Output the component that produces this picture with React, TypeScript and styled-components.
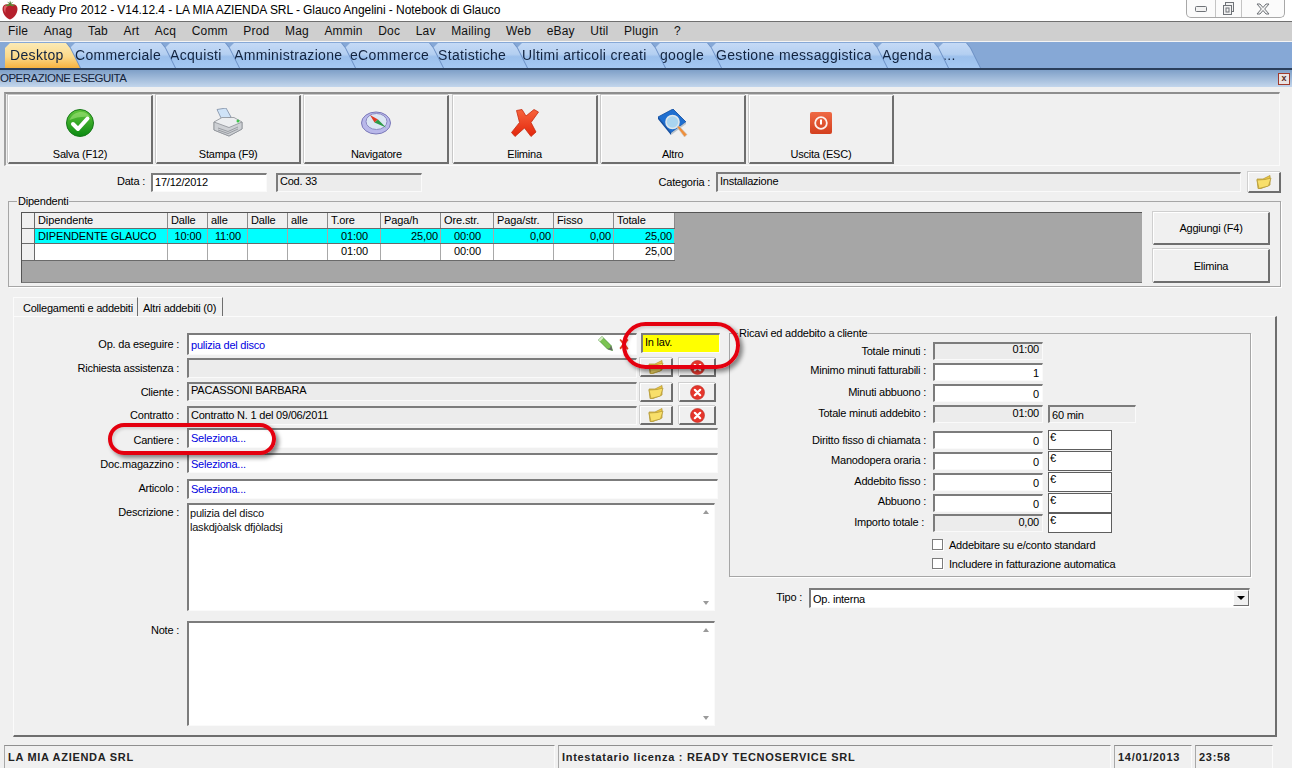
import styled, { createGlobalStyle } from "styled-components";

const GlobalStyle = createGlobalStyle`
	html, body {
		margin: 0;
		padding: 0;
		background: #f0f0f0;
	}
	* {
		box-sizing: border-box;
	}
`;

const Page = styled.div`
	position: relative;
	width: 1292px;
	height: 768px;
	overflow: hidden;
	background: #f0f0f0;
	color: #000;
	font-family: "Liberation Sans", Arial, sans-serif;
	font-size: 11px;
	letter-spacing: -0.22px;
`;

const TitleBar = styled.div`
	height: 22px;
	display: flex;
	align-items: flex-start;
	background: #fff;
	border-bottom: 1px solid #707070;
	padding-left: 2px;
`;
const TitleText = styled.span`
	margin: 3px 0 0 3px;
	font-size: 12px;
	line-height: 15px;
	letter-spacing: -0.06px;
	white-space: nowrap;
`;
const WindowButtons = styled.div`
	margin-left: auto;
	margin-right: 7px;
	width: 99px;
	height: 18px;
	display: grid;
	grid-template-columns: 28px 26px 1fr;
	border: 1px solid #a8a8a8;
	border-top: 0;
	border-radius: 0 0 5px 5px;
	background: #fbfbfb;
	svg {
		margin: 0 auto;
	}
`;
const WindowButton = styled.div`
	display: flex;
	align-items: center;
	& + & {
		border-left: 1px solid #c4c4c4;
	}
`;

const MenuBar = styled.div`
	height: 20px;
	display: flex;
	align-items: center;
	gap: 15.5px;
	padding: 0 0 1px 8px;
	background: #cfcfcf;
	border-bottom: 1px solid #f4f4f4;
	font-size: 12px;
	letter-spacing: 0.2px;
	color: #111;
`;
const MenuItem = styled.span`
	white-space: nowrap;
`;

const TabBar = styled.div`
	height: 28px;
	display: flex;
	align-items: flex-end;
	padding-left: 5px;
	background: #86a8d6;
	border-bottom: 2px solid #2b3f5c;
`;
const TabEdge = styled.div<{ $w: number; $z: number }>`
	position: relative;
	z-index: ${(props) => props.$z};
	width: ${(props) => props.$w}px;
	margin-right: -10px;
	filter: drop-shadow(1px 0 0 #6b8fc4);
`;
const TabFace = styled.div<{ $active?: boolean }>`
	height: 25px;
	padding: 3px 0 0 5px;
	clip-path: polygon(0 100%, 0 5px, 5px 0, calc(100% - 14px) 0, calc(100% - 10px) 5px, 100% 100%);
	background: ${(props) =>
		props.$active
			? "linear-gradient(#fbeab6 0%, #fbd98a 55%, #f7b23f 100%)"
			: "linear-gradient(#c5daf6 0%, #b4cff1 45%, #9cc0ec 55%, #a5c8f2 100%)"};
	font-size: 14px;
	line-height: 19px;
	letter-spacing: 0.33px;
	white-space: nowrap;
	color: #12233f;
`;

const CaptionBar = styled.div`
	height: 17px;
	display: flex;
	align-items: center;
	justify-content: space-between;
	padding: 0 2px 2px 0;
	background: linear-gradient(#7fa0c8, #c3d6ec);
	font-size: 11.5px;
	letter-spacing: -0.5px;
	color: #14233a;
`;
const CaptionClose = styled.span`
	width: 12px;
	height: 12px;
	margin-top: 2px;
	display: flex;
	align-items: center;
	justify-content: center;
	background: #e9e3e3;
	border: 1px solid #a03a2c;
	font-size: 9px;
	font-weight: bold;
	line-height: 9px;
	letter-spacing: 0;
	color: #5b2a22;
`;

const ToolbarPanel = styled.div`
	height: 74px;
	margin: 5px 12px 0 4px;
	padding: 1px 0 0 2px;
	display: flex;
	gap: 3.2px;
	border: 1px solid #fafafa;
	border-top: 2px solid #8e8e8e;
	border-left: 2px solid #a0a0a0;
`;
const ToolButton = styled.div`
	width: 145px;
	height: 69px;
	display: flex;
	flex-direction: column;
	align-items: center;
	padding-top: 12px;
	background: #f0f0f0;
	border: 2px solid #6e6e6e;
	border-top: 1px solid #fff;
	border-left: 1px solid #fff;
	box-shadow: -1px -1px 0 #c8c8c8;
`;
const ToolIcon = styled.div`
	width: 32px;
	height: 30px;
	display: flex;
	align-items: center;
	justify-content: center;
`;
const ToolLabel = styled.span`
	margin-top: 9px;
	line-height: 14px;
`;

const DataRow = styled.div`
	height: 21px;
	margin-top: 6px;
	display: flex;
	align-items: flex-start;
`;
const Caption = styled.span<{ $w?: number; $mt?: number }>`
	width: ${(props) => (props.$w ? props.$w + "px" : "auto")};
	margin-top: ${(props) => props.$mt || 0}px;
	flex: none;
	text-align: right;
	line-height: 14px;
	white-space: nowrap;
`;

const Sunken = styled.div<{
	$w?: number;
	$h?: number;
	$ml?: number;
	$mt?: number;
	$pt?: number;
	$lh?: number;
	$fill?: string;
	$blue?: boolean;
	$right?: boolean;
}>`
	width: ${(props) => (props.$w ? props.$w + "px" : "100%")};
	height: ${(props) => (props.$h ? props.$h + "px" : "100%")};
	margin-left: ${(props) => props.$ml || 0}px;
	margin-top: ${(props) => props.$mt || 0}px;
	flex: none;
	padding: ${(props) => props.$pt ?? 1}px 3px 0 2px;
	background: ${(props) => props.$fill || "#fff"};
	border-style: solid;
	border-width: 2px 1px 1px 2px;
	border-color: #7c7c7c #fafafa #fafafa #7c7c7c;
	color: ${(props) => (props.$blue ? "#0000e0" : "#000")};
	text-align: ${(props) => (props.$right ? "right" : "left")};
	line-height: ${(props) => props.$lh || 14}px;
	white-space: nowrap;
`;

const GroupBox = styled.div<{ $h: number }>`
	position: relative;
	height: ${(props) => props.$h}px;
	border: 1px solid #a6a6a6;
	box-shadow: 1px 1px 0 #fff;
`;
const GroupTitle = styled.span`
	position: absolute;
	top: -7px;
	left: 8px;
	padding: 0 1px;
	background: #f0f0f0;
	line-height: 13px;
`;

const StaffBox = styled(GroupBox)`
	margin: 8px 11px 0 8px;
	padding: 10px 10px 0 12px;
	display: flex;
`;
const GridArea = styled.div`
	width: 1121px;
	height: 71px;
	background: #a6a6a6;
	border-top: 1px solid #555;
	border-left: 1px solid #555;
	border-bottom: 1px solid #777;
	letter-spacing: -0.12px;
`;
const GridRow = styled.div<{ $fill: string; $h: number }>`
	width: 653px;
	height: ${(props) => props.$h}px;
	display: grid;
	grid-template-columns: 13px 133px 40px 40px 40px 40px 53px 60px 53px 60px 60px 61px;
	background: ${(props) => props.$fill};
	border-bottom: 1px solid #6a6a6a;
`;
const GridCell = styled.div<{ $align?: string; $head?: boolean }>`
	padding: 0 2px 0 3px;
	border-right: 1px solid ${(props) => (props.$head ? "#8a8a8a" : "#a8a8a8")};
	text-align: ${(props) => props.$align || "left"};
	line-height: 14px;
	white-space: nowrap;
	overflow: hidden;
`;
const RowMark = styled(GridCell)`
	background: #f0f0f0;
	border-right: 1px solid #6a6a6a;
`;
const SideButtons = styled.div`
	margin-left: 11px;
	display: flex;
	flex-direction: column;
	gap: 4px;
`;

const RaisedButton = styled.div<{ $w: number; $h: number; $ml?: number; $mt?: number }>`
	width: ${(props) => props.$w}px;
	height: ${(props) => props.$h}px;
	margin-left: ${(props) => props.$ml || 0}px;
	margin-top: ${(props) => props.$mt || 0}px;
	flex: none;
	display: flex;
	align-items: center;
	justify-content: center;
	background: #f0f0f0;
	border: 2px solid #6e6e6e;
	border-top: 1px solid #fff;
	border-left: 1px solid #fff;
	box-shadow: -1px -1px 0 #cfcfcf;
`;

const PageTabs = styled.div`
	height: 19px;
	margin: 10px 0 0 13px;
	display: flex;
`;
const PageTab = styled.div<{ $w: number; $active?: boolean }>`
	width: ${(props) => props.$w}px;
	padding: ${(props) => (props.$active ? "3px 0 0 9px" : "3px 0 0 5px")};
	border-right: 1px solid #6e6e6e;
	border-left: ${(props) => (props.$active ? "1px solid #fbfbfb" : "0")};
	border-top: 1px solid #fbfbfb;
	line-height: 14px;
	white-space: nowrap;
`;
const PagePanel = styled.div`
	height: 421px;
	margin: 0 15px 0 13px;
	padding-top: 16px;
	display: flex;
	border-top: 1px solid #fbfbfb;
	border-left: 1px solid #fbfbfb;
	border-right: 2px solid #6e6e6e;
	border-bottom: 2px solid #6e6e6e;
`;
const LeftColumn = styled.div`
	width: 705px;
	flex: none;
`;
const FormRow = styled.div<{ $h: number; $gap?: number }>`
	height: ${(props) => props.$h}px;
	margin-top: ${(props) => props.$gap || 0}px;
	display: flex;
	align-items: flex-start;
`;
const MemoBox = styled.div`
	position: relative;
	width: 528px;
	height: 100%;
	margin-left: 8px;
	padding: 1px 20px 0 1px;
	background: #fff;
	border-style: solid;
	border-width: 2px 1px 1px 2px;
	border-color: #7c7c7c #fafafa #fafafa #7c7c7c;
	line-height: 14px;
	color: #111;
`;
const ArrowUp = styled.i`
	position: absolute;
	top: 5px;
	right: 5px;
	border: 3px solid transparent;
	border-top: 0;
	border-bottom: 4px solid #9a9a9a;
`;
const ArrowDown = styled(ArrowUp)`
	top: auto;
	bottom: 5px;
	border-bottom: 0;
	border-top: 4px solid #9a9a9a;
`;
const InlineIcons = styled.div`
	position: absolute;
	top: 1px;
	right: 7px;
	display: flex;
	align-items: center;
	gap: 6px;
`;
const OpInput = styled(Sunken)`
	position: relative;
`;

const RightColumn = styled.div`
	width: 522px;
	margin-left: 10px;
	flex: none;
`;
const RevenueBox = styled(GroupBox)`
	padding-top: 8px;
`;
const RevenueRow = styled.div<{ $gap?: number }>`
	height: 18px;
	margin-top: ${(props) => props.$gap || 0}px;
	display: flex;
	align-items: flex-start;
`;
const Currency = styled.div`
	width: 64px;
	height: 20px;
	margin: -1px 0 0 5px;
	flex: none;
	padding-left: 1px;
	background: #fff;
	border: 1px solid #5e5e5e;
	line-height: 13px;
`;
const CheckRow = styled.div<{ $gap?: number }>`
	height: 11px;
	margin: ${(props) => props.$gap || 0}px 0 0 202px;
	display: flex;
	align-items: center;
	gap: 6px;
	white-space: nowrap;
`;
const CheckBox = styled.span`
	width: 11px;
	height: 11px;
	flex: none;
	background: #fff;
	border: 1px solid #7c7c7c;
	box-shadow: 1px 1px 0 #fff;
`;
const TypeRow = styled.div`
	height: 20px;
	margin-top: 11px;
	display: flex;
	align-items: flex-start;
`;
const SelectBox = styled(Sunken)`
	position: relative;
	padding-top: 2px;
`;
const SelectArrow = styled.span`
	position: absolute;
	top: 0;
	right: 0;
	width: 16px;
	height: 16px;
	display: flex;
	align-items: center;
	justify-content: center;
	background: #f0f0f0;
	border: 1px solid #6e6e6e;
	border-top-color: #fff;
	border-left-color: #fff;
	&::after {
		content: "";
		border: 4px solid transparent;
		border-bottom: 0;
		border-top: 4px solid #000;
	}
`;

const StatusBar = styled.div`
	height: 23px;
	margin-top: 8px;
	padding-left: 4px;
	display: flex;
	gap: 3px;
`;
const StatusCell = styled.div<{ $w: number }>`
	width: ${(props) => props.$w}px;
	padding: 4px 0 0 3px;
	border-top: 1px solid #8f8f8f;
	border-left: 1px solid #a8a8a8;
	border-right: 1px solid #fbfbfb;
	font-weight: bold;
	letter-spacing: 0.7px;
	line-height: 14px;
	white-space: nowrap;
	color: #222;
`;

const RedRing = styled.div<{ $x: number; $y: number; $w: number; $h: number }>`
	position: absolute;
	left: ${(props) => props.$x}px;
	top: ${(props) => props.$y}px;
	width: ${(props) => props.$w}px;
	height: ${(props) => props.$h}px;
	border: 4px solid #e4000f;
	border-radius: ${(props) => props.$h / 2}px;
	box-shadow: 3px 3px 4px rgba(0, 0, 0, 0.45), inset 2px 2px 3px rgba(0, 0, 0, 0.12);
`;

function Strawberry() {
	return (
		<svg width="16" height="20" viewBox="0 0 16 20">
			<path d="M8 5C12 3 15.500 5 15.500 9C15.500 14 11 19 8 19.500C5 19 .5 14 .5 9C.5 5 4 3 8 5Z" fill="#b5202c" />
			<path d="M2 7C2.500 5 5 5 6 6C4 7 3 10 3.500 13C2 11 1.500 9 2 7Z" fill="#e0616a" />
			<path d="M8 5L5 1.500L7.500 3L8 .5L9 3L11.500 1.500Z" fill="#4d7a2c" />
			<path d="M3 5.500L8 3.500L13 5.500L10 6.200L8 5.200L6 6.200Z" fill="#5b8a34" />
		</svg>
	);
}

function CheckIcon() {
	return (
		<svg width="28" height="28" viewBox="0 0 28 28">
			<defs>
				<linearGradient id="greenDisc" x1="0" y1="0" x2="0" y2="1">
					<stop offset="0" stopColor="#62c63c" />
					<stop offset="1" stopColor="#0b8a12" />
				</linearGradient>
			</defs>
			<ellipse cx="14" cy="14" rx="13.500" ry="13.500" fill="url(#greenDisc)" stroke="#17791a" />
			<path d="M3.500 11C6 5 11 3 15 3C19 3 22 4.500 24 8C18 7 10 8 3.500 11Z" fill="#a5e57f" opacity=".55" />
			<path d="M7 15L12 20L21.500 9.500" fill="none" stroke="#fff" strokeWidth="4" strokeLinecap="round" strokeLinejoin="round" />
		</svg>
	);
}

function PrinterIcon() {
	return (
		<svg width="30" height="30" viewBox="0 0 30 30">
			<path d="M4 1.500L13 0L18 9L9 12Z" fill="#cfe3f7" stroke="#7d8da3" strokeWidth=".8" />
			<path d="M1 14L9 9.500H21L29 14V21L16 28L1 22Z" fill="#eceef0" stroke="#8b8f95" strokeWidth=".8" />
			<path d="M1 14L16 19.500L29 14V21L16 28L1 22Z" fill="#cdd0d4" stroke="#8b8f95" strokeWidth=".8" />
			<path d="M5 20L15 23.500L25 19M5 22L15 25.500L25 21" fill="none" stroke="#8b8f95" strokeWidth=".8" />
			<circle cx="25" cy="13" r="1.500" fill="#3dc44a" />
		</svg>
	);
}

function CompassIcon() {
	return (
		<svg width="30" height="24" viewBox="0 0 30 24">
			<ellipse cx="15" cy="12" rx="14.500" ry="11" fill="#b9b8ea" stroke="#7a78b8" />
			<ellipse cx="15.500" cy="10.500" rx="10.500" ry="8" fill="#dce6f4" stroke="#8c8ac2" />
			<path d="M9 4L17 8.500L13.500 11.500Z" fill="#e03b24" />
			<path d="M13.500 11.500L17 8.500L25 16.500Z" fill="#2e9a48" />
		</svg>
	);
}

function CrossIcon() {
	return (
		<svg width="28" height="28" viewBox="0 0 28 28">
			<defs>
				<linearGradient id="redCross" x1="0" y1="0" x2="0" y2="1">
					<stop offset="0" stopColor="#f8643c" />
					<stop offset="1" stopColor="#e2260c" />
				</linearGradient>
			</defs>
			<path
				d="M5.500 1.500L11 .5L15 7L23 .5L27.500 3L20 13.500L25 23L20 27.500L13.500 19L4 27.500L.5 23.500L8.500 13.500Z"
				fill="url(#redCross)"
				stroke="#c62b10"
				strokeWidth=".8"
				strokeLinejoin="round"
			/>
		</svg>
	);
}

function BookIcon() {
	return (
		<svg width="30" height="29" viewBox="0 0 30 29">
			<path d="M0 8L15 0L28 13L13 24Z" fill="#1f6fd0" stroke="#0d4a9e" strokeWidth=".8" />
			<path d="M0 8L13 24V26L0 10Z" fill="#0d4a9e" />
			<path d="M13 24L28 13V15L13 26Z" fill="#b9c3cc" />
			<circle cx="14.500" cy="13" r="6.500" fill="#a9d4f0" stroke="#dfe6ea" strokeWidth="1.600" />
			<path d="M19 18L21 17L29 25.500L26.500 28Z" fill="#ef8f3a" stroke="#c8c8c8" strokeWidth=".6" />
		</svg>
	);
}

function PowerIcon() {
	return (
		<svg width="22" height="22" viewBox="0 0 22 22">
			<defs>
				<linearGradient id="powerTile" x1="0" y1="0" x2="0" y2="1">
					<stop offset="0" stopColor="#ef6a45" />
					<stop offset="1" stopColor="#d33f1e" />
				</linearGradient>
			</defs>
			<rect width="22" height="22" rx="2" fill="url(#powerTile)" />
			<circle cx="11" cy="11" r="5.800" fill="none" stroke="#fff" strokeWidth="1.800" opacity=".92" />
			<rect x="10" y="7.500" width="2" height="5" fill="#fff" />
		</svg>
	);
}

function FolderIcon() {
	return (
		<svg width="16" height="14" viewBox="0 0 16 14">
			<path d="M1 4H7L14 .5V10L5 13.500H2Z" fill="#f0c93f" stroke="#b59a3b" strokeWidth=".8" strokeLinejoin="round" />
			<path d="M1 5L9 4.500L15 3L12.500 11L3 13.500Z" fill="#f8df6a" stroke="#b59a3b" strokeWidth=".8" strokeLinejoin="round" />
		</svg>
	);
}

function ClearIcon() {
	return (
		<svg width="15" height="15" viewBox="0 0 15 15">
			<circle cx="7.500" cy="7.500" r="7" fill="#e5352b" stroke="#b92a22" strokeWidth=".6" />
			<path d="M4.800 4.800L10.200 10.200M10.200 4.800L4.800 10.200" stroke="#fff" strokeWidth="2.200" strokeLinecap="round" />
		</svg>
	);
}

function PencilIcon() {
	return (
		<svg width="15" height="15" viewBox="0 0 15 15">
			<path d="M.5 4L4 .5L13 9.500L14.500 14.500L9.500 13Z" fill="#7cc452" stroke="#3f8a2e" strokeWidth=".7" />
			<path d="M.5 4L4 .5L5.500 2L2 5.500Z" fill="#d9efc8" />
			<path d="M12 12L13 9.500L14.500 14.500L9.500 13Z" fill="#666" />
		</svg>
	);
}

function SmallCross() {
	return (
		<svg width="10" height="14" viewBox="0 0 10 14">
			<path d="M1.500 2L5 5L8 1.500L9.500 3L6.500 7L9.500 11.500L8 13L5 9L1.500 12.500L.5 11L3.500 7L.5 3Z" fill="#e2401e" />
		</svg>
	);
}

const menuItems = ["File", "Anag", "Tab", "Art", "Acq", "Comm", "Prod", "Mag", "Ammin", "Doc", "Lav", "Mailing", "Web", "eBay", "Util", "Plugin", "?"];

const tabs = [
	{ label: "Desktop", width: 75, active: true },
	{ label: "Commerciale", width: 105 },
	{ label: "Acquisti", width: 74 },
	{ label: "Amministrazione", width: 126 },
	{ label: "eCommerce", width: 98 },
	{ label: "Statistiche", width: 94 },
	{ label: "Ultimi articoli creati", width: 148 },
	{ label: "google", width: 66 },
	{ label: "Gestione messaggistica", width: 176 },
	{ label: "Agenda", width: 71 },
	{ label: "...", width: 42 },
];

const tools = [
	{ label: "Salva (F12)", icon: <CheckIcon /> },
	{ label: "Stampa (F9)", icon: <PrinterIcon /> },
	{ label: "Navigatore", icon: <CompassIcon /> },
	{ label: "Elimina", icon: <CrossIcon /> },
	{ label: "Altro", icon: <BookIcon /> },
	{ label: "Uscita (ESC)", icon: <PowerIcon /> },
];

const columns = ["Dipendente", "Dalle", "alle", "Dalle", "alle", "T.ore", "Paga/h", "Ore.str.", "Paga/str.", "Fisso", "Totale"];
const columnAlign = ["left", "center", "center", "center", "center", "center", "right", "center", "right", "right", "right"];
const staffRows = [
	{ fill: "#00ffff", h: 15, cells: ["DIPENDENTE GLAUCO", "10:00", "11:00", "", "", "01:00", "25,00", "00:00", "0,00", "0,00", "25,00"] },
	{ fill: "#ffffff", h: 17, cells: ["", "", "", "", "", "01:00", "", "00:00", "", "", "25,00"] },
];

function FileButtons({ top = 0 }: { top?: number }) {
	return (
		<>
			<RaisedButton $w={33} $h={19} $ml={3} $mt={top}>
				<FolderIcon />
			</RaisedButton>
			<RaisedButton $w={37} $h={19} $ml={6} $mt={top}>
				<ClearIcon />
			</RaisedButton>
		</>
	);
}

function App() {
	return (
		<Page>
			<GlobalStyle />
			<TitleBar>
				<Strawberry />
				<TitleText>Ready Pro 2012 - V14.12.4 - LA MIA AZIENDA SRL - Glauco Angelini - Notebook di Glauco</TitleText>
				<WindowButtons>
					<WindowButton>
						<svg width="12" height="6" viewBox="0 0 12 6">
							<rect x=".5" y=".5" width="11" height="5" rx="1" fill="#f2f2f2" stroke="#6f7378" />
						</svg>
					</WindowButton>
					<WindowButton>
						<svg width="11" height="13" viewBox="0 0 11 13">
							<rect x="2.500" y=".5" width="8" height="9" fill="#f2f2f2" stroke="#6f7378" />
							<rect x=".5" y="3.500" width="8" height="9" fill="#f2f2f2" stroke="#6f7378" />
							<rect x="3" y="6" width="3" height="4" fill="none" stroke="#6f7378" />
						</svg>
					</WindowButton>
					<WindowButton>
						<svg width="14" height="12" viewBox="0 0 14 12">
							<path d="M1 1H4L7 4.500L10 1H13L8.700 6L13 11H10L7 7.500L4 11H1L5.300 6Z" fill="#f4f4f4" stroke="#6f7378" />
						</svg>
					</WindowButton>
				</WindowButtons>
			</TitleBar>

			<MenuBar>
				{menuItems.map((item) => (
					<MenuItem key={item}>{item}</MenuItem>
				))}
			</MenuBar>

			<TabBar>
				{tabs.map((tab, i) => (
					<TabEdge key={tab.label} $w={tab.width} $z={tabs.length - i}>
						<TabFace $active={tab.active}>{tab.label}</TabFace>
					</TabEdge>
				))}
			</TabBar>

			<CaptionBar>
				OPERAZIONE ESEGUITA
				<CaptionClose>x</CaptionClose>
			</CaptionBar>

			<ToolbarPanel>
				{tools.map((tool) => (
					<ToolButton key={tool.label}>
						<ToolIcon>{tool.icon}</ToolIcon>
						<ToolLabel>{tool.label}</ToolLabel>
					</ToolButton>
				))}
			</ToolbarPanel>

			<DataRow>
				<Caption $w={145} $mt={2}>Data :</Caption>
				<Sunken $w={116} $h={19} $ml={6} $mt={1} $lh={12}>17/12/2012</Sunken>
				<Sunken $w={146} $h={19} $ml={9} $mt={1} $lh={10} $fill="#ececec">Cod. 33</Sunken>
				<Caption $w={288} $mt={3}>Categoria :</Caption>
				<Sunken $w={525} $h={20} $ml={6} $lh={12} $fill="#ececec">Installazione</Sunken>
				<RaisedButton $w={33} $h={21} $ml={7}>
					<FolderIcon />
				</RaisedButton>
			</DataRow>

			<StaffBox $h={86}>
				<GroupTitle>Dipendenti</GroupTitle>
				<GridArea>
					<GridRow $fill="#f0f0f0" $h={16}>
						<RowMark $head />
						{columns.map((col, i) => (
							<GridCell key={i} $head>{col}</GridCell>
						))}
					</GridRow>
					{staffRows.map((row, r) => (
						<GridRow key={r} $fill={row.fill} $h={row.h}>
							<RowMark />
							{row.cells.map((cell, i) => (
								<GridCell key={i} $align={columnAlign[i]}>{cell}</GridCell>
							))}
						</GridRow>
					))}
				</GridArea>
				<SideButtons>
					<RaisedButton $w={117} $h={33}>Aggiungi (F4)</RaisedButton>
					<RaisedButton $w={117} $h={34}>Elimina</RaisedButton>
				</SideButtons>
			</StaffBox>

			<PageTabs>
				<PageTab $w={125} $active>Collegamenti e addebiti</PageTab>
				<PageTab $w={85}>Altri addebiti (0)</PageTab>
			</PageTabs>
			<PagePanel>
				<LeftColumn>
					<FormRow $h={22}>
						<Caption $w={165} $mt={4}>Op. da eseguire :</Caption>
						<OpInput $w={450} $ml={8} $pt={3} $blue>
							pulizia del disco
							<InlineIcons>
								<PencilIcon />
								<SmallCross />
							</InlineIcons>
						</OpInput>
						<Sunken $w={79} $h={20} $ml={4} $pt={0} $fill="#ffff00">In lav.</Sunken>
					</FormRow>
					<FormRow $h={20} $gap={3}>
						<Caption $w={165} $mt={3}>Richiesta assistenza :</Caption>
						<Sunken $w={450} $ml={8} $fill="#ececec" />
						<FileButtons />
					</FormRow>
					<FormRow $h={19} $gap={4}>
						<Caption $w={165} $mt={3}>Cliente :</Caption>
						<Sunken $w={450} $ml={8} $lh={10} $fill="#ececec">PACASSONI BARBARA</Sunken>
						<FileButtons top={1} />
					</FormRow>
					<FormRow $h={19} $gap={5}>
						<Caption $w={165} $mt={2}>Contratto :</Caption>
						<Sunken $w={450} $ml={8} $lh={12} $fill="#ececec">Contratto N. 1 del 09/06/2011</Sunken>
						<FileButtons />
					</FormRow>
					<FormRow $h={20} $gap={3}>
						<Caption $w={165} $mt={5}>Cantiere :</Caption>
						<Sunken $w={531} $ml={8} $blue>Seleziona...</Sunken>
					</FormRow>
					<FormRow $h={20} $gap={5}>
						<Caption $w={165} $mt={4}>Doc.magazzino :</Caption>
						<Sunken $w={531} $ml={8} $pt={2} $blue>Seleziona...</Sunken>
					</FormRow>
					<FormRow $h={20} $gap={6}>
						<Caption $w={165} $mt={2}>Articolo :</Caption>
						<Sunken $w={531} $ml={8} $blue>Seleziona...</Sunken>
					</FormRow>
					<FormRow $h={108} $gap={4}>
						<Caption $w={165} $mt={2}>Descrizione :</Caption>
						<MemoBox>
							pulizia del disco
							<br />
							laskdjòalsk dfjòladsj
							<ArrowUp />
							<ArrowDown />
						</MemoBox>
					</FormRow>
					<FormRow $h={105} $gap={10}>
						<Caption $w={165} $mt={2}>Note :</Caption>
						<MemoBox>
							<ArrowUp />
							<ArrowDown />
						</MemoBox>
					</FormRow>
				</LeftColumn>

				<RightColumn>
					<RevenueBox $h={244}>
						<GroupTitle>Ricavi ed addebito a cliente</GroupTitle>
						<RevenueRow>
							<Caption $w={196} $mt={2}>Totale minuti :</Caption>
							<Sunken $w={110} $ml={7} $lh={8} $fill="#ececec" $right>01:00</Sunken>
						</RevenueRow>
						<RevenueRow $gap={3}>
							<Caption $w={196}>Minimo minuti fatturabili :</Caption>
							<Sunken $w={110} $ml={7} $right>1</Sunken>
						</RevenueRow>
						<RevenueRow $gap={3}>
							<Caption $w={196} $mt={1}>Minuti abbuono :</Caption>
							<Sunken $w={110} $ml={7} $right>0</Sunken>
						</RevenueRow>
						<RevenueRow $gap={3}>
							<Caption $w={196} $mt={1}>Totale minuti addebito :</Caption>
							<Sunken $w={110} $ml={7} $lh={10} $fill="#ececec" $right>01:00</Sunken>
							<Sunken $w={88} $ml={5} $fill="#ececec">60 min</Sunken>
						</RevenueRow>
						<RevenueRow $gap={8}>
							<Caption $w={196} $mt={2}>Diritto fisso di chiamata :</Caption>
							<Sunken $w={110} $ml={7} $right>0</Sunken>
							<Currency>€</Currency>
						</RevenueRow>
						<RevenueRow $gap={3}>
							<Caption $w={196} $mt={1}>Manodopera oraria :</Caption>
							<Sunken $w={110} $ml={7} $right>0</Sunken>
							<Currency>€</Currency>
						</RevenueRow>
						<RevenueRow $gap={3}>
							<Caption $w={196} $mt={1}>Addebito fisso :</Caption>
							<Sunken $w={110} $ml={7} $right>0</Sunken>
							<Currency>€</Currency>
						</RevenueRow>
						<RevenueRow $gap={3}>
							<Caption $w={196}>Abbuono :</Caption>
							<Sunken $w={110} $ml={7} $right>0</Sunken>
							<Currency>€</Currency>
						</RevenueRow>
						<RevenueRow $gap={2}>
							<Caption $w={194} $mt={1}>Importo totale :</Caption>
							<Sunken $w={110} $ml={9} $lh={10} $fill="#ececec" $right>0,00</Sunken>
							<Currency>€</Currency>
						</RevenueRow>
						<CheckRow $gap={7}>
							<CheckBox />
							Addebitare su e/conto standard
						</CheckRow>
						<CheckRow $gap={8}>
							<CheckBox />
							Includere in fatturazione automatica
						</CheckRow>
					</RevenueBox>
					<TypeRow>
						<Caption $w={73} $mt={2}>Tipo :</Caption>
						<SelectBox $w={441} $ml={7}>
							Op. interna
							<SelectArrow />
						</SelectBox>
					</TypeRow>
				</RightColumn>
			</PagePanel>

			<StatusBar>
				<StatusCell $w={551}>LA MIA AZIENDA SRL</StatusCell>
				<StatusCell $w={553}>Intestatario licenza : READY TECNOSERVICE SRL</StatusCell>
				<StatusCell $w={78}>14/01/2013</StatusCell>
				<StatusCell $w={78}>23:58</StatusCell>
			</StatusBar>

			<RedRing $x={622} $y={322} $w={118} $h={47} />
			<RedRing $x={108} $y={423} $w={168} $h={32} />
		</Page>
	);
}

export default App;
